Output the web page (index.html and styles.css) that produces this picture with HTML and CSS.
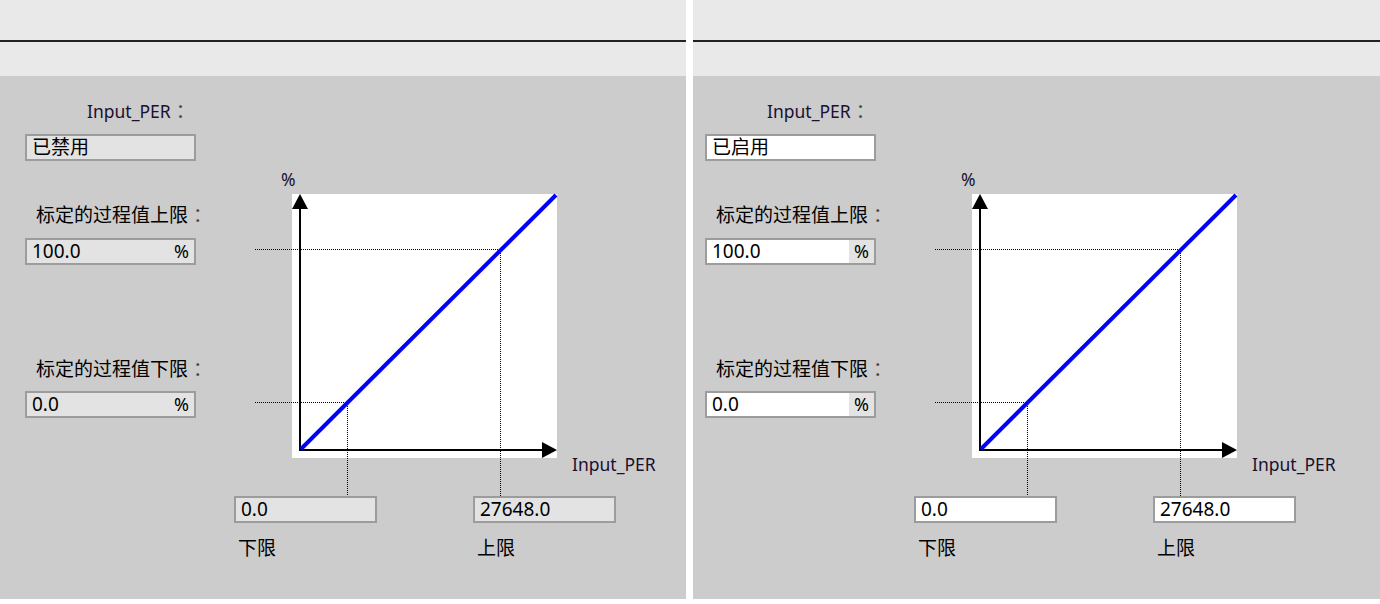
FILE: index.html
```html
<!DOCTYPE html>
<html lang="zh">
  <head>
    <meta charset="UTF-8" />
    <meta name="viewport" content="width=device-width, initial-scale=1.0" />
    <title>Input_PER scaling</title>

    <!-- CSS -->
    <link rel="stylesheet" href="styles.css">
  </head>
  <body>
    <div class="screen">
      <!-- Disabled -->
      <section class="panel panel-off">
        <div class="topbar"></div>
        <div class="subbar"></div>
        <div class="content">
          <div class="form">
            <div class="label label-per">Input_PER<span class="colon">：</span></div>
            <div class="field"><span class="value">已禁用</span></div>
            <div class="label label-hi">标定的过程值上限<span class="colon">：</span></div>
            <div class="field"><span class="value">100.0</span><span class="unit">%</span></div>
            <div class="label label-lo">标定的过程值下限<span class="colon">：</span></div>
            <div class="field"><span class="value">0.0</span><span class="unit">%</span></div>
          </div>

          <div class="chart-area">
            <svg class="chart" width="430" height="336" viewBox="0 0 430 336">
              <rect x="58" y="34" width="265" height="264" fill="#fff" />
              <g class="dots">
                <line x1="21" y1="89.5" x2="266" y2="89.5" />
                <line x1="21" y1="242.5" x2="113" y2="242.5" />
                <line x1="113.5" y1="242" x2="113.5" y2="336" />
                <line x1="266.5" y1="89" x2="266.5" y2="336" />
              </g>
              <line x1="66" y1="48" x2="66" y2="291" stroke="#000" stroke-width="2" />
              <line x1="65" y1="290" x2="310" y2="290" stroke="#000" stroke-width="2" />
              <polygon points="66,34 58,49 74,49" fill="#000" />
              <polygon points="323,290 308,282 308,298" fill="#000" />
              <line x1="67" y1="289" x2="322" y2="35" stroke="#0000ff" stroke-width="4" />
              <text class="axis-text" x="47" y="26">%</text>
              <text class="axis-text" x="338" y="311">Input_PER</text>
            </svg>

            <div class="range">
              <div class="range-item">
                <div class="field field-range"><span class="value">0.0</span></div>
                <div class="label range-label">下限</div>
              </div>
              <div class="range-item">
                <div class="field field-range"><span class="value">27648.0</span></div>
                <div class="label range-label">上限</div>
              </div>
            </div>
          </div>
        </div>
      </section>

      <!-- Enabled -->
      <section class="panel panel-on">
        <div class="topbar"></div>
        <div class="subbar"></div>
        <div class="content">
          <div class="form">
            <div class="label label-per">Input_PER<span class="colon">：</span></div>
            <div class="field"><span class="value">已启用</span></div>
            <div class="label label-hi">标定的过程值上限<span class="colon">：</span></div>
            <div class="field"><span class="value">100.0</span><span class="unit">%</span></div>
            <div class="label label-lo">标定的过程值下限<span class="colon">：</span></div>
            <div class="field"><span class="value">0.0</span><span class="unit">%</span></div>
          </div>

          <div class="chart-area">
            <svg class="chart" width="430" height="336" viewBox="0 0 430 336">
              <rect x="58" y="34" width="265" height="264" fill="#fff" />
              <g class="dots">
                <line x1="21" y1="89.5" x2="266" y2="89.5" />
                <line x1="21" y1="242.5" x2="113" y2="242.5" />
                <line x1="113.5" y1="242" x2="113.5" y2="336" />
                <line x1="266.5" y1="89" x2="266.5" y2="336" />
              </g>
              <line x1="66" y1="48" x2="66" y2="291" stroke="#000" stroke-width="2" />
              <line x1="65" y1="290" x2="310" y2="290" stroke="#000" stroke-width="2" />
              <polygon points="66,34 58,49 74,49" fill="#000" />
              <polygon points="323,290 308,282 308,298" fill="#000" />
              <line x1="67" y1="289" x2="322" y2="35" stroke="#0000ff" stroke-width="4" />
              <text class="axis-text" x="47" y="26">%</text>
              <text class="axis-text" x="338" y="311">Input_PER</text>
            </svg>

            <div class="range">
              <div class="range-item">
                <div class="field field-range"><span class="value">0.0</span></div>
                <div class="label range-label">下限</div>
              </div>
              <div class="range-item">
                <div class="field field-range"><span class="value">27648.0</span></div>
                <div class="label range-label">上限</div>
              </div>
            </div>
          </div>
        </div>
      </section>
    </div>
  </body>
</html>
```

FILE: styles.css
```css
body {
  margin: 0;
  background-color: #fff;
  font-family: "Noto Sans", "Noto Sans CJK SC", sans-serif;
  font-size: 19px;
  color: #000;
}

.screen {
  display: flex;
  gap: 7px;
  height: 604px;
}

.panel {
  display: flex;
  flex-direction: column;
  width: 686px;
}

.panel-on {
  width: 687px;
}

.topbar {
  height: 40px;
  background-color: #e9e9e9;
  border-bottom: 2px solid #222;
}

.subbar {
  height: 34px;
  background-color: #e9e9e9;
}

.content {
  display: flex;
  height: 523px;
  background-color: #cccccc;
}

/* left column */
.form {
  width: 171px;
  margin-left: 25px;
  padding-top: 22px;
}

.panel-on .form {
  margin-left: 12px;
}

.label {
  height: 24px;
  line-height: 24px;
  white-space: nowrap;
}

.colon {
  padding-left: 5px;
  font-family: "Noto Sans CJK TC", sans-serif;
  font-size: 19px;
  color: #444;
}

.label-per {
  margin-left: 62px;
  margin-bottom: 12px;
  font-size: 17.5px;
  color: #1a1030;
}

.label-hi {
  margin-left: 11px;
  margin-top: 41px;
  margin-bottom: 12px;
}

.label-lo {
  margin-left: 11px;
  margin-top: 91px;
  margin-bottom: 11px;
}

.field {
  display: flex;
  box-sizing: border-box;
  height: 27px;
  border: 2px solid #9c9c9c;
  background-color: #e3e3e3;
  line-height: 23px;
}

.field .value {
  flex: 1;
  padding-left: 5px;
  white-space: nowrap;
}

.field .unit {
  width: 25px;
  text-align: center;
  font-size: 18px;
}

.panel-on .field {
  background-color: #fff;
}

.panel-on .field .unit {
  background-color: #e3e3e3;
}

/* chart */
.chart-area {
  margin-left: 38px;
  padding-top: 84px;
}

.chart {
  display: block;
}

.dots line {
  stroke: #000;
  stroke-width: 1;
  stroke-dasharray: 1 1;
  shape-rendering: crispEdges;
}

.axis-text {
  font-family: "Noto Sans", sans-serif;
  font-size: 17.5px;
  fill: #1a1030;
}

.range {
  display: flex;
  gap: 96px;
}

.field-range {
  width: 143px;
}

.range-label {
  margin-top: 13px;
  padding-left: 4px;
}
```
